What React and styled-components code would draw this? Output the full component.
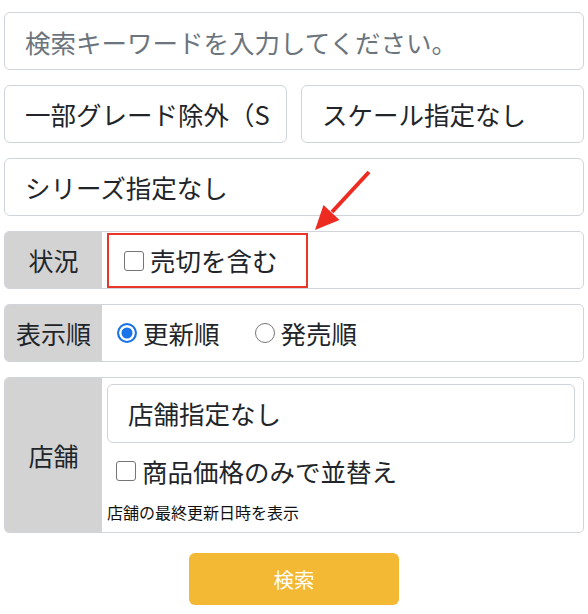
import React from "react";
import styled, { createGlobalStyle } from "styled-components";

const GlobalStyle = createGlobalStyle`
  html, body { margin: 0; padding: 0; background: #fff; }
  body {
    font-family: "Noto Sans CJK JP", "Noto Sans", sans-serif;
    color: #212529;
  }
  * { box-sizing: border-box; }
`;

const Page = styled.div`
  position: relative;
  width: 588px;
  padding: 12px 4px 9px;
  display: flex;
  flex-direction: column;
  gap: 15px;
`;

const SearchInput = styled.input`
  display: block;
  width: 100%;
  height: 58px;
  padding: 0 20px;
  border: 1px solid #ced4da;
  border-radius: 6px;
  font-family: inherit;
  font-size: 25.5px;
  color: #212529;
  outline: none;
  &::placeholder { color: #6c757d; }
`;

const Pair = styled.div`
  display: grid;
  grid-template-columns: 1fr 1fr;
  gap: 14px;
`;

const SelectBox = styled.div`
  display: flex;
  align-items: center;
  height: 58px;
  padding: 0 20px;
  border: 1px solid #ced4da;
  border-radius: 6px;
  font-size: 25.5px;
  line-height: 1.2;
  white-space: nowrap;
  overflow: hidden;
  background: #fff;
`;

const FieldRow = styled.div`
  display: flex;
  min-height: 58px;
  border: 1px solid #d1d5db;
  border-radius: 5px;
  overflow: hidden;
`;

const FieldLabel = styled.div`
  flex: none;
  width: 97px;
  background: #d3d3d3;
  display: flex;
  align-items: center;
  justify-content: center;
  font-size: 25px;
  line-height: 1.2;
`;

const FieldBody = styled.div`
  flex: 1;
  display: flex;
  flex-direction: ${(p) => (p.$column ? "column" : "row")};
  align-items: ${(p) => p.$align || "center"};
  padding: ${(p) => p.$pad || "0"};
`;

const Highlight = styled.div`
  display: flex;
  align-items: center;
  width: 201px;
  padding-left: 15px;
  border: 2.5px solid #e8362b;
`;

const Option = styled.label`
  display: inline-flex;
  align-items: center;
  gap: ${(p) => p.$gap || "6px"};
  font-size: 25.5px;
  line-height: 1.2;
  margin-left: ${(p) => p.$ml || "0"};
`;

const Check = styled.input.attrs({ type: "checkbox" })`
  appearance: none;
  margin: 0;
  width: 20px;
  height: 20px;
  border: 1.5px solid #767676;
  border-radius: 3px;
  background: #fff;
  flex: none;
`;

const Radio = styled.input.attrs({ type: "radio" })`
  appearance: none;
  margin: 0;
  width: 20px;
  height: 20px;
  border: 1.5px solid #767676;
  border-radius: 50%;
  background: #fff;
  flex: none;
  &:checked {
    border: 2.5px solid #1a73e8;
    background: #1a73e8;
    box-shadow: inset 0 0 0 2.5px #fff;
  }
`;

const InnerSelect = styled(SelectBox)`
  height: 59px;
`;

const CheckLine = styled.div`
  display: flex;
  align-items: center;
  height: 30px;
  margin-top: 13px;
  padding-left: 9px;
`;

const Note = styled.div`
  margin-top: 16px;
  font-size: 16px;
  line-height: 20px;
  color: #111;
`;

const SubmitButton = styled.button`
  align-self: center;
  width: 210px;
  height: 52px;
  margin-top: 5px;
  border: none;
  border-radius: 6px;
  background: #f3b834;
  color: #fff;
  font-family: inherit;
  font-size: 20.5px;
`;

const ArrowSvg = styled.svg`
  position: absolute;
  left: 305px;
  top: 165px;
  pointer-events: none;
`;

function Arrow() {
  return (
    <ArrowSvg width="75" height="75" viewBox="0 0 75 75">
      <line x1="64" y1="7" x2="27" y2="47" stroke="#ee2b20" strokeWidth="4" />
      <polygon points="10,65 34.5,55 18.5,40" fill="#ee2b20" />
    </ArrowSvg>
  );
}

export default function App() {
  return (
    <>
      <GlobalStyle />
      <Page>
        <SearchInput placeholder="検索キーワードを入力してください。" />
        <Pair>
          <SelectBox>一部グレード除外（S</SelectBox>
          <SelectBox>スケール指定なし</SelectBox>
        </Pair>
        <SelectBox>シリーズ指定なし</SelectBox>

        <FieldRow>
          <FieldLabel>状況</FieldLabel>
          <FieldBody $align="stretch" $pad="1px 0 0 5px">
            <Highlight>
              <Option $gap="6px">
                <Check />
                売切を含む
              </Option>
            </Highlight>
          </FieldBody>
        </FieldRow>

        <FieldRow>
          <FieldLabel>表示順</FieldLabel>
          <FieldBody $pad="0 0 0 15px">
            <Option>
              <Radio name="order" defaultChecked />
              更新順
            </Option>
            <Option $ml="35px">
              <Radio name="order" />
              発売順
            </Option>
          </FieldBody>
        </FieldRow>

        <FieldRow>
          <FieldLabel>店舗</FieldLabel>
          <FieldBody $column $align="stretch" $pad="6px 8px 10px 5px">
            <InnerSelect>店舗指定なし</InnerSelect>
            <CheckLine>
              <Option $gap="6px">
                <Check />
                商品価格のみで並替え
              </Option>
            </CheckLine>
            <Note>店舗の最終更新日時を表示</Note>
          </FieldBody>
        </FieldRow>

        <SubmitButton type="button">検索</SubmitButton>
        <Arrow />
      </Page>
    </>
  );
}
